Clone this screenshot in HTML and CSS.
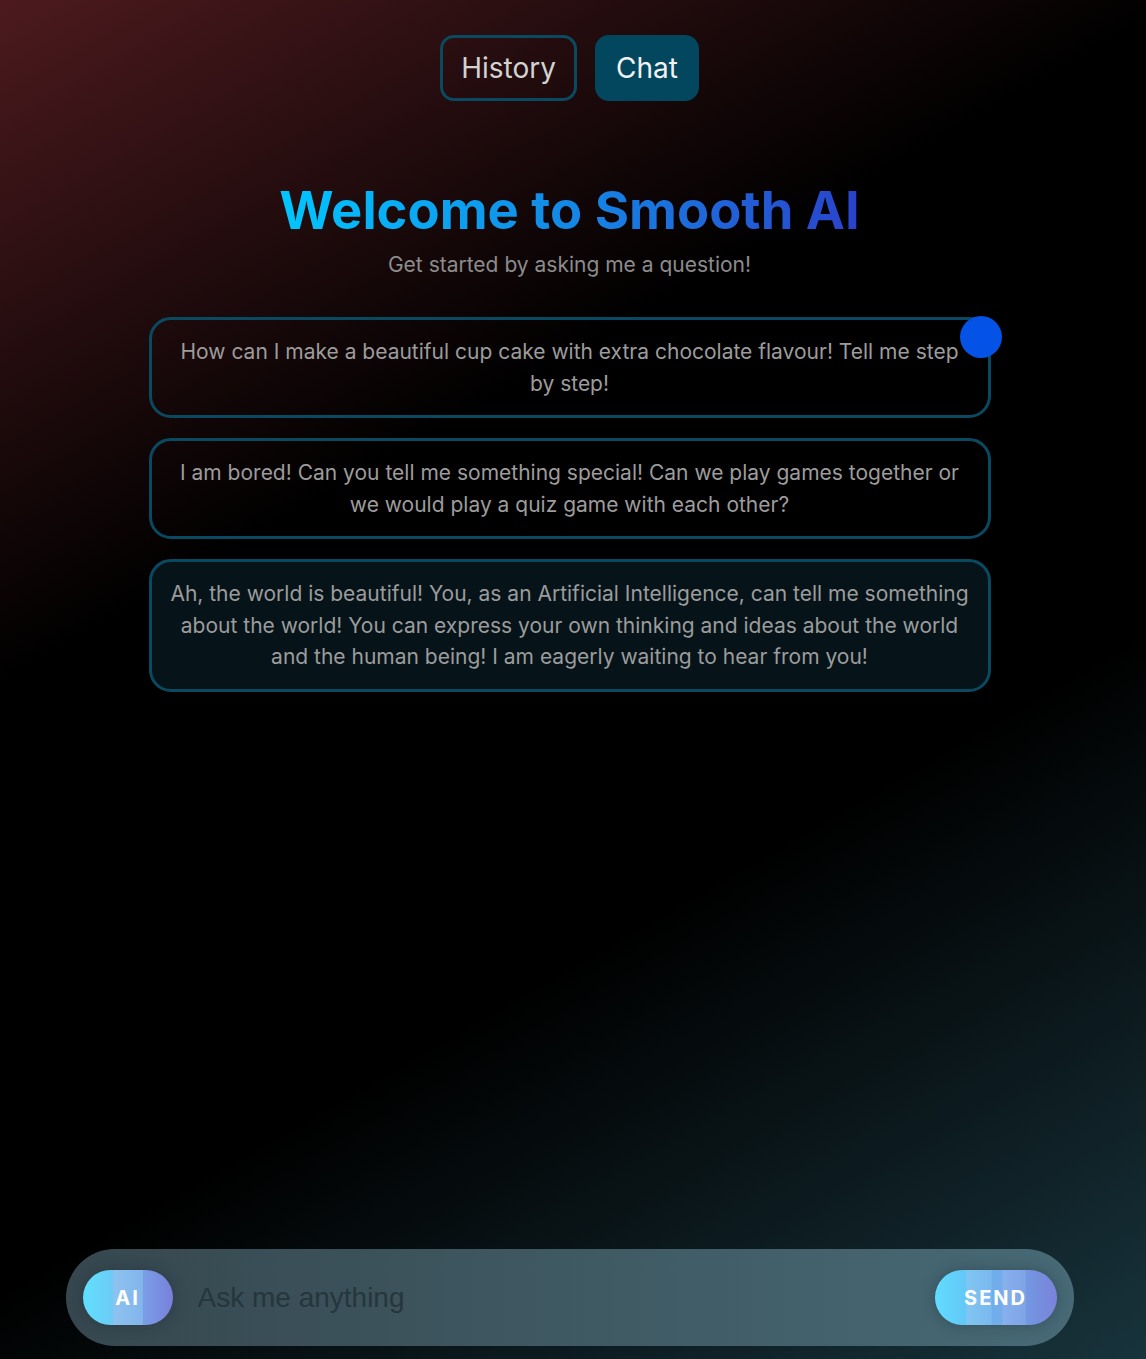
FILE: index.html
```html
<!DOCTYPE html>
<html lang="en">
<head>
<meta charset="utf-8">
<title>Smooth AI</title>
<link rel="stylesheet" href="styles.css">
</head>
<body>
<div class="app">
  <nav class="tabs">
    <button class="tab">History</button>
    <button class="tab tab-active">Chat</button>
  </nav>
  <h1 class="title">Welcome to Smooth AI</h1>
  <p class="subtitle">Get started by asking me a question!</p>
  <section class="prompts">
    <div class="prompt">
      How can I make a beautiful cup cake with extra chocolate flavour! Tell me step by step!
      <span class="dot"></span>
    </div>
    <div class="prompt">
      I am bored! Can you tell me something special! Can we play games together or we would play a quiz game with each other?
    </div>
    <div class="prompt prompt-filled">
      Ah, the world is beautiful! You, as an Artificial Intelligence, can tell me something about the world! You can express your own thinking and ideas about the world and the human being! I am eagerly waiting to hear from you!
    </div>
  </section>
  <form class="composer">
    <button type="button" class="pill pill-ai">AI</button>
    <input class="ask" type="text" placeholder="Ask me anything">
    <button type="button" class="pill pill-send">SEND</button>
  </form>
</div>
</body>
</html>
```
FILE: styles.css
```css
html, body {
  margin: 0;
  padding: 0;
  height: 100%;
}
body {
  background: linear-gradient(150deg, #4c1a1e 0%, #000 34%, #000 64%, #18333c 100%);
  font-family: "Inter", "Noto Sans", sans-serif;
  color: #9a9a9a;
}
.app {
  width: 1139px;
  min-height: 100vh;
  display: flex;
  flex-direction: column;
  align-items: center;
  box-sizing: border-box;
}
.tabs {
  display: flex;
  gap: 18px;
  margin-top: 35px;
}
.tab {
  font-family: "Inter", sans-serif;
  font-size: 28px;
  line-height: 34px;
  padding: 13px 18px;
  border: 3px solid #0a4a60;
  border-radius: 14px;
  background: transparent;
  color: #d2d2d2;
}
.tab-active {
  background: #03475e;
  border-color: #03475e;
  color: #f2f2f2;
}
.title {
  margin: 78px 0 0;
  font-size: 52.5px;
  line-height: 62px;
  font-weight: 700;
  background: linear-gradient(90deg, #00c6ff 0%, #1488e6 50%, #2a42cc 100%);
  -webkit-background-clip: text;
  background-clip: text;
  color: transparent;
}
.subtitle {
  margin: 10px 0 0;
  font-size: 21px;
  line-height: 28px;
  color: #8c8c8c;
}
.prompts {
  margin-top: 38px;
  width: 842px;
  display: flex;
  flex-direction: column;
  gap: 20px;
}
.prompt {
  position: relative;
  border: 3px solid #0a4a61;
  border-radius: 22px;
  padding: 16px 18px;
  font-size: 21px;
  line-height: 31.5px;
  text-align: center;
  color: #9c9c9c;
}
.prompt-filled {
  background: #061319;
}
.dot {
  position: absolute;
  top: -4px;
  right: -14px;
  width: 42px;
  height: 42px;
  border-radius: 50%;
  background: #0552e6;
}
.composer {
  margin-top: auto;
  margin-bottom: 13px;
  width: 1008px;
  height: 97px;
  box-sizing: border-box;
  padding: 0 17px;
  border-radius: 49px;
  background: linear-gradient(90deg, #36474f 0%, #3f5962 50%, #476a76 100%);
  display: flex;
  align-items: center;
}
.pill {
  height: 55px;
  border: none;
  border-radius: 28px;
  font-family: "Inter", sans-serif;
  font-weight: 700;
  font-size: 20px;
  letter-spacing: 2px;
  color: #fff;
  box-shadow: 0 0 14px rgba(20, 35, 45, 0.35);
}
.pill-ai {
  width: 90px;
  background: linear-gradient(90deg, #5fe0ff 0%, #6ccbf5 33%, #8dc2f0 34%, #82b6ec 66%, #7a9ee6 67%, #7880da 100%);
}
.pill-send {
  width: 122px;
  background: linear-gradient(90deg, #62dcff 0%, #63c8f7 25%, #80c6f2 26%, #7ab8ee 46%, #6eaeeb 47%, #75aceb 55%, #87b0ee 56%, #7ea4e6 74%, #7398e2 75%, #7a82da 100%);
}
.ask {
  flex: 1;
  margin: 0 20px 0 25px;
  height: 55px;
  background: transparent;
  border: none;
  outline: none;
  font-family: "Liberation Sans", Arial, sans-serif;
  font-size: 28px;
  color: #cfd8dc;
  padding: 0;
}
.ask::placeholder {
  color: #26363d;
}
```
